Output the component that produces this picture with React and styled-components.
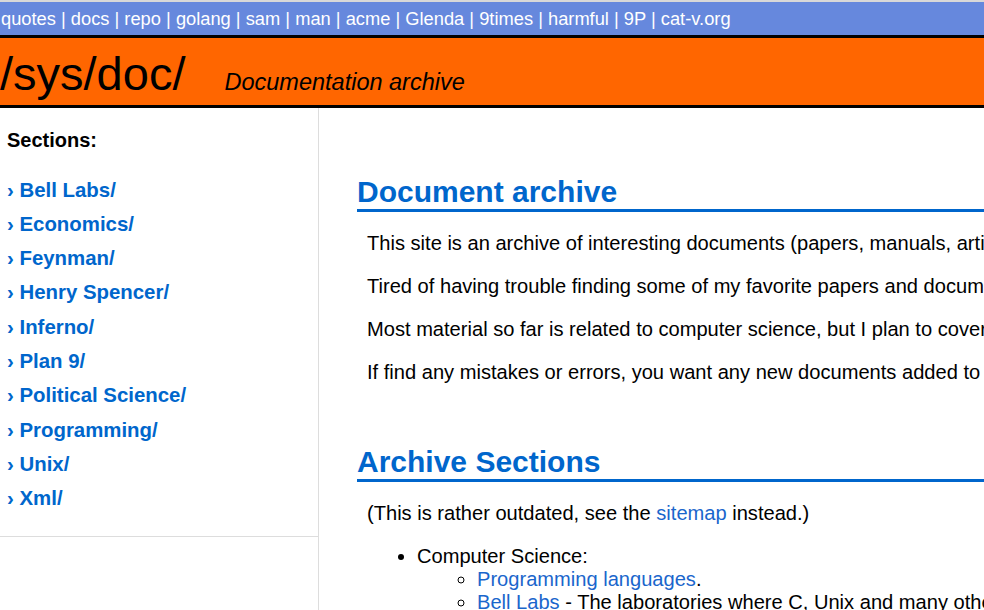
import React from "react";
import styled, { createGlobalStyle } from "styled-components";

const GlobalStyle = createGlobalStyle`
  html, body {
    margin: 0;
    padding: 0;
    background: #fff;
    overflow: hidden;
  }
  body {
    font-family: "Liberation Sans", Arial, sans-serif;
    color: #000;
  }
`;

const Page = styled.div`
  width: 100%;
  min-height: 610px;
  display: flex;
  flex-direction: column;
`;

const SuperHeader = styled.nav`
  border-top: 2px solid #d8d8d8;
  background: #6688dd;
  color: #fff;
  font-size: 18.3px;
  line-height: 21px;
  padding: 6px 1px 6px;
  border-bottom: 3px solid #000;
  white-space: nowrap;
`;

const NavLink = styled.a`
  color: #fff;
  text-decoration: none;
`;

const Header = styled.header`
  background: #ff6600;
  height: 67px;
  box-sizing: content-box;
  border-bottom: 3px solid #000;
  display: flex;
  align-items: baseline;
  white-space: nowrap;
`;

const SiteTitle = styled.h1`
  margin: 0;
  padding-top: 9px;
  font-size: 47px;
  line-height: 54px;
  font-weight: normal;
  color: #000;
`;

const SubTitle = styled.span`
  margin-left: 39px;
  font-size: 23.5px;
  font-style: italic;
`;

const Body = styled.div`
  display: flex;
  flex: 1;
`;

const Sidebar = styled.aside`
  width: 318px;
  flex-shrink: 0;
  border-right: 1px solid #dddddd;
`;

const SideBox = styled.div`
  padding: 20.5px 7px 25.5px;
  border-bottom: 1px solid #dddddd;
`;

const SideTitle = styled.div`
  font-size: 20px;
  font-weight: bold;
  line-height: 23px;
`;

const SideList = styled.ul`
  list-style: none;
  margin: 27px 0 0;
  padding: 0;
`;

const SideItem = styled.li`
  font-size: 20.4px;
  font-weight: bold;
  line-height: 23px;
  margin-bottom: 11.33px;
  color: #0066cc;
  &:last-child {
    margin-bottom: 0;
  }
`;

const SideLink = styled.a`
  color: #0066cc;
  text-decoration: none;
`;

const Main = styled.main`
  flex: 1;
  min-width: 0;
  overflow: hidden;
  padding: 6px 0 0 38px;
  white-space: nowrap;
  font-size: 20.1px;
  line-height: 23px;
`;

const Heading = styled.h2`
  margin: 60px 0 20px;
  font-size: 30px;
  line-height: 35px;
  font-weight: bold;
  color: #0066cc;
  border-bottom: 3px solid #0066cc;
`;

const Para = styled.p`
  margin: 20px 0 20px 10px;
`;

const Link = styled.a`
  color: #1a66cc;
  text-decoration: none;
`;

const List = styled.ul`
  margin: 20px 0;
  padding-left: 60px;
  list-style: disc;
`;

const SubList = styled(List)`
  margin: 0;
  list-style: circle;
`;

const navItems = [
  "quotes", "docs", "repo", "golang", "sam", "man", "acme",
  "Glenda", "9times", "harmful", "9P", "cat-v.org",
];

const sections = [
  "Bell Labs", "Economics", "Feynman", "Henry Spencer", "Inferno",
  "Plan 9", "Political Science", "Programming", "Unix", "Xml",
];

export default function App() {
  return (
    <Page>
      <GlobalStyle />
      <SuperHeader>
        {navItems.map((n, i) => (
          <React.Fragment key={n}>
            {i > 0 && " | "}
            <NavLink href="#">{n}</NavLink>
          </React.Fragment>
        ))}
      </SuperHeader>
      <Header>
        <SiteTitle>/sys/doc/</SiteTitle>
        <SubTitle>Documentation archive</SubTitle>
      </Header>
      <Body>
        <Sidebar>
          <SideBox>
            <SideTitle>Sections:</SideTitle>
            <SideList>
              {sections.map((s) => (
                <SideItem key={s}>
                  › <SideLink href="#">{s}/</SideLink>
                </SideItem>
              ))}
            </SideList>
          </SideBox>
        </Sidebar>
        <Main>
          <Heading>Document archive</Heading>
          <Para>
            This site is an archive of interesting documents (papers, manuals, articles, talks, etc.), mostly related to computer science.
          </Para>
          <Para>
            Tired of having trouble finding some of my favorite papers and documents, I decided to collect them in one place.
          </Para>
          <Para>
            Most material so far is related to computer science, but I plan to cover other topics in the future.
          </Para>
          <Para>
            If find any mistakes or errors, you want any new documents added to the archive, please let me know.
          </Para>
          <Heading>Archive Sections</Heading>
          <Para>
            (This is rather outdated, see the <Link href="#">sitemap</Link> instead.)
          </Para>
          <List>
            <li>
              Computer Science:
              <SubList>
                <li>
                  <Link href="#">Programming languages</Link>.
                </li>
                <li>
                  <Link href="#">Bell Labs</Link> - The laboratories where C, Unix and many other great things were created.
                </li>
              </SubList>
            </li>
          </List>
        </Main>
      </Body>
    </Page>
  );
}
